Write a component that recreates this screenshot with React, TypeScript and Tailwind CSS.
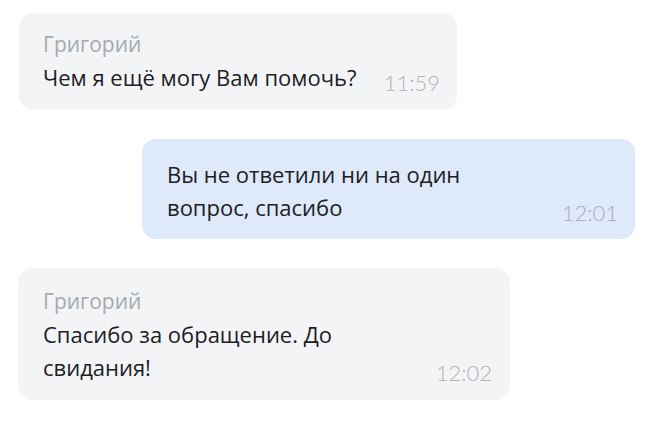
export default function App() {
  return (
    <div
      className="w-[660px] h-[428px] bg-white flex flex-col gap-[29px] pt-[13px] text-[#1d2024]"
      style={{ fontFamily: "'Open Sans', 'Noto Sans', sans-serif" }}
    >
      {/* incoming */}
      <div className="ml-[19px] w-[438px] rounded-[14px] bg-[#f3f4f6] pl-[24px] pr-[17px] pt-[15px] pb-[16px]">
        <div className="text-[21px] leading-[33px] text-[#a6aaaf]">Григорий</div>
        <div className="flex items-end justify-between">
          <span className="text-[22px] leading-[33px]">Чем я ещё могу Вам помочь?</span>
          <span className="text-[22px] leading-[22px] font-light text-[#b0b3b8] font-['Lato']">11:59</span>
        </div>
      </div>

      {/* outgoing */}
      <div className="self-end mr-[25px] w-[493px] rounded-[14px] bg-[#dee9f9] pl-[25px] pr-[17px] pt-[19px] pb-[15px]">
        <div className="flex items-end justify-between">
          <span className="text-[22px] leading-[33px]">
            Вы не ответили ни на один
            <br />
            вопрос, спасибо
          </span>
          <span className="text-[22px] leading-[22px] font-light text-[#a9b0ba] font-['Lato']">12:01</span>
        </div>
      </div>

      {/* incoming */}
      <div className="ml-[18px] w-[492px] rounded-[14px] bg-[#f3f4f6] pl-[25px] pr-[18px] pt-[17px] pb-[16px]">
        <div className="text-[21px] leading-[33px] text-[#a6aaaf]">Григорий</div>
        <div className="flex items-end justify-between">
          <span className="text-[22px] leading-[33px]">
            Спасибо за обращение. До
            <br />
            свидания!
          </span>
          <span className="text-[22px] leading-[22px] font-light text-[#b0b3b8] font-['Lato']">12:02</span>
        </div>
      </div>
    </div>
  );
}
